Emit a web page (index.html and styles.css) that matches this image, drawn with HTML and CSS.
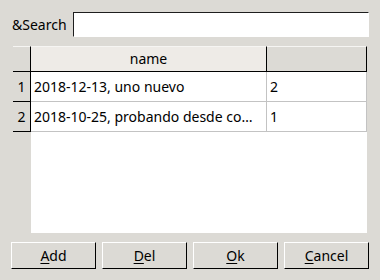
FILE: index.html
```html
<!DOCTYPE html>
<html>
<head>
<meta charset="utf-8">
<link rel="stylesheet" href="styles.css">
</head>
<body>
<div class="window">
  <div class="search-row">
    <label class="search-label" for="q">&amp;Search</label>
    <input class="entry" id="q" type="text">
  </div>
  <div class="table">
    <div class="corner"></div>
    <div class="header">
      <div class="hcell hname">name</div>
      <div class="hcell hval"></div>
    </div>
    <div class="rowheads">
      <div class="rowhead">1</div>
      <div class="rowhead">2</div>
    </div>
    <div class="body">
      <div class="row">
        <div class="cell cname">2018-12-13, uno nuevo</div>
        <div class="cell cval">2</div>
      </div>
      <div class="row">
        <div class="cell cname">2018-10-25, probando desde co…</div>
        <div class="cell cval">1</div>
      </div>
    </div>
  </div>
  <div class="buttons">
    <button class="btn"><u>A</u>dd</button>
    <button class="btn"><u>D</u>el</button>
    <button class="btn"><u>O</u>k</button>
    <button class="btn"><u>C</u>ancel</button>
  </div>
</div>
</body>
</html>
```
FILE: styles.css
```css
html, body {
  margin: 0;
  padding: 0;
  width: 380px;
  height: 280px;
  background: #dcdad5;
  overflow: hidden;
}
.window {
  display: flex;
  flex-direction: column;
  padding: 12px 11px 0 11px;
  font-family: "Noto Sans", "Open Sans", sans-serif;
  font-size: 14px;
  color: #000;
}
.search-row {
  display: flex;
  align-items: center;
  height: 25px;
}
.search-label {
  width: 61px;
  padding-left: 1px;
  line-height: 25px;
}
.entry {
  flex: 1;
  height: 25px;
  box-sizing: border-box;
  margin: 0;
  padding: 0 3px;
  background: #fff;
  border-style: solid;
  border-width: 1px;
  border-color: #1e1e1e #ffffff #ffffff #1e1e1e;
  outline: none;
  font: inherit;
}
.table {
  margin: 9px 2px 0 2px;
  height: 187px;
  display: grid;
  grid-template-columns: 18px 1fr;
  grid-template-rows: 26px 1fr;
}
.corner {
  box-sizing: border-box;
  border-top: 1px solid #f6f5f3;
  border-right: 1px solid #000;
  border-bottom: 1px solid #000;
}
.header {
  display: flex;
}
.hcell {
  box-sizing: border-box;
  height: 26px;
  border-top: 1px solid #f6f5f3;
  border-right: 1px solid #000;
  border-bottom: 1px solid #000;
  text-align: center;
  line-height: 24px;
}
.hname {
  width: 236px;
  background: #eeebe7;
}
.hval {
  flex: 1;
  background: #dcdad5;
}
.rowheads {
  display: flex;
  flex-direction: column;
}
.rowhead {
  box-sizing: border-box;
  height: 30px;
  border-right: 1px solid #000;
  border-bottom: 1px solid #000;
  text-align: center;
  line-height: 29px;
}
.body {
  background: #fff;
  display: flex;
  flex-direction: column;
}
.row {
  display: flex;
  height: 30px;
  box-sizing: border-box;
  border-bottom: 1px solid #c3c3c3;
}
.cell {
  box-sizing: border-box;
  border-right: 1px solid #c3c3c3;
  padding-left: 3px;
  line-height: 29px;
  white-space: nowrap;
  overflow: hidden;
}
.cname {
  width: 236px;
}
.cval {
  flex: 1;
}
.buttons {
  display: flex;
  gap: 6px;
  margin-top: 9px;
}
.btn {
  flex: 1;
  height: 27px;
  box-sizing: border-box;
  margin: 0;
  padding: 0;
  background: #dcdad5;
  border-style: solid;
  border-width: 1px;
  border-color: #ffffff #000000 #000000 #ffffff;
  font: inherit;
  color: #000;
  line-height: 24px;
}
.btn u {
  text-decoration-thickness: 1px;
  text-underline-offset: 2px;
}
```
